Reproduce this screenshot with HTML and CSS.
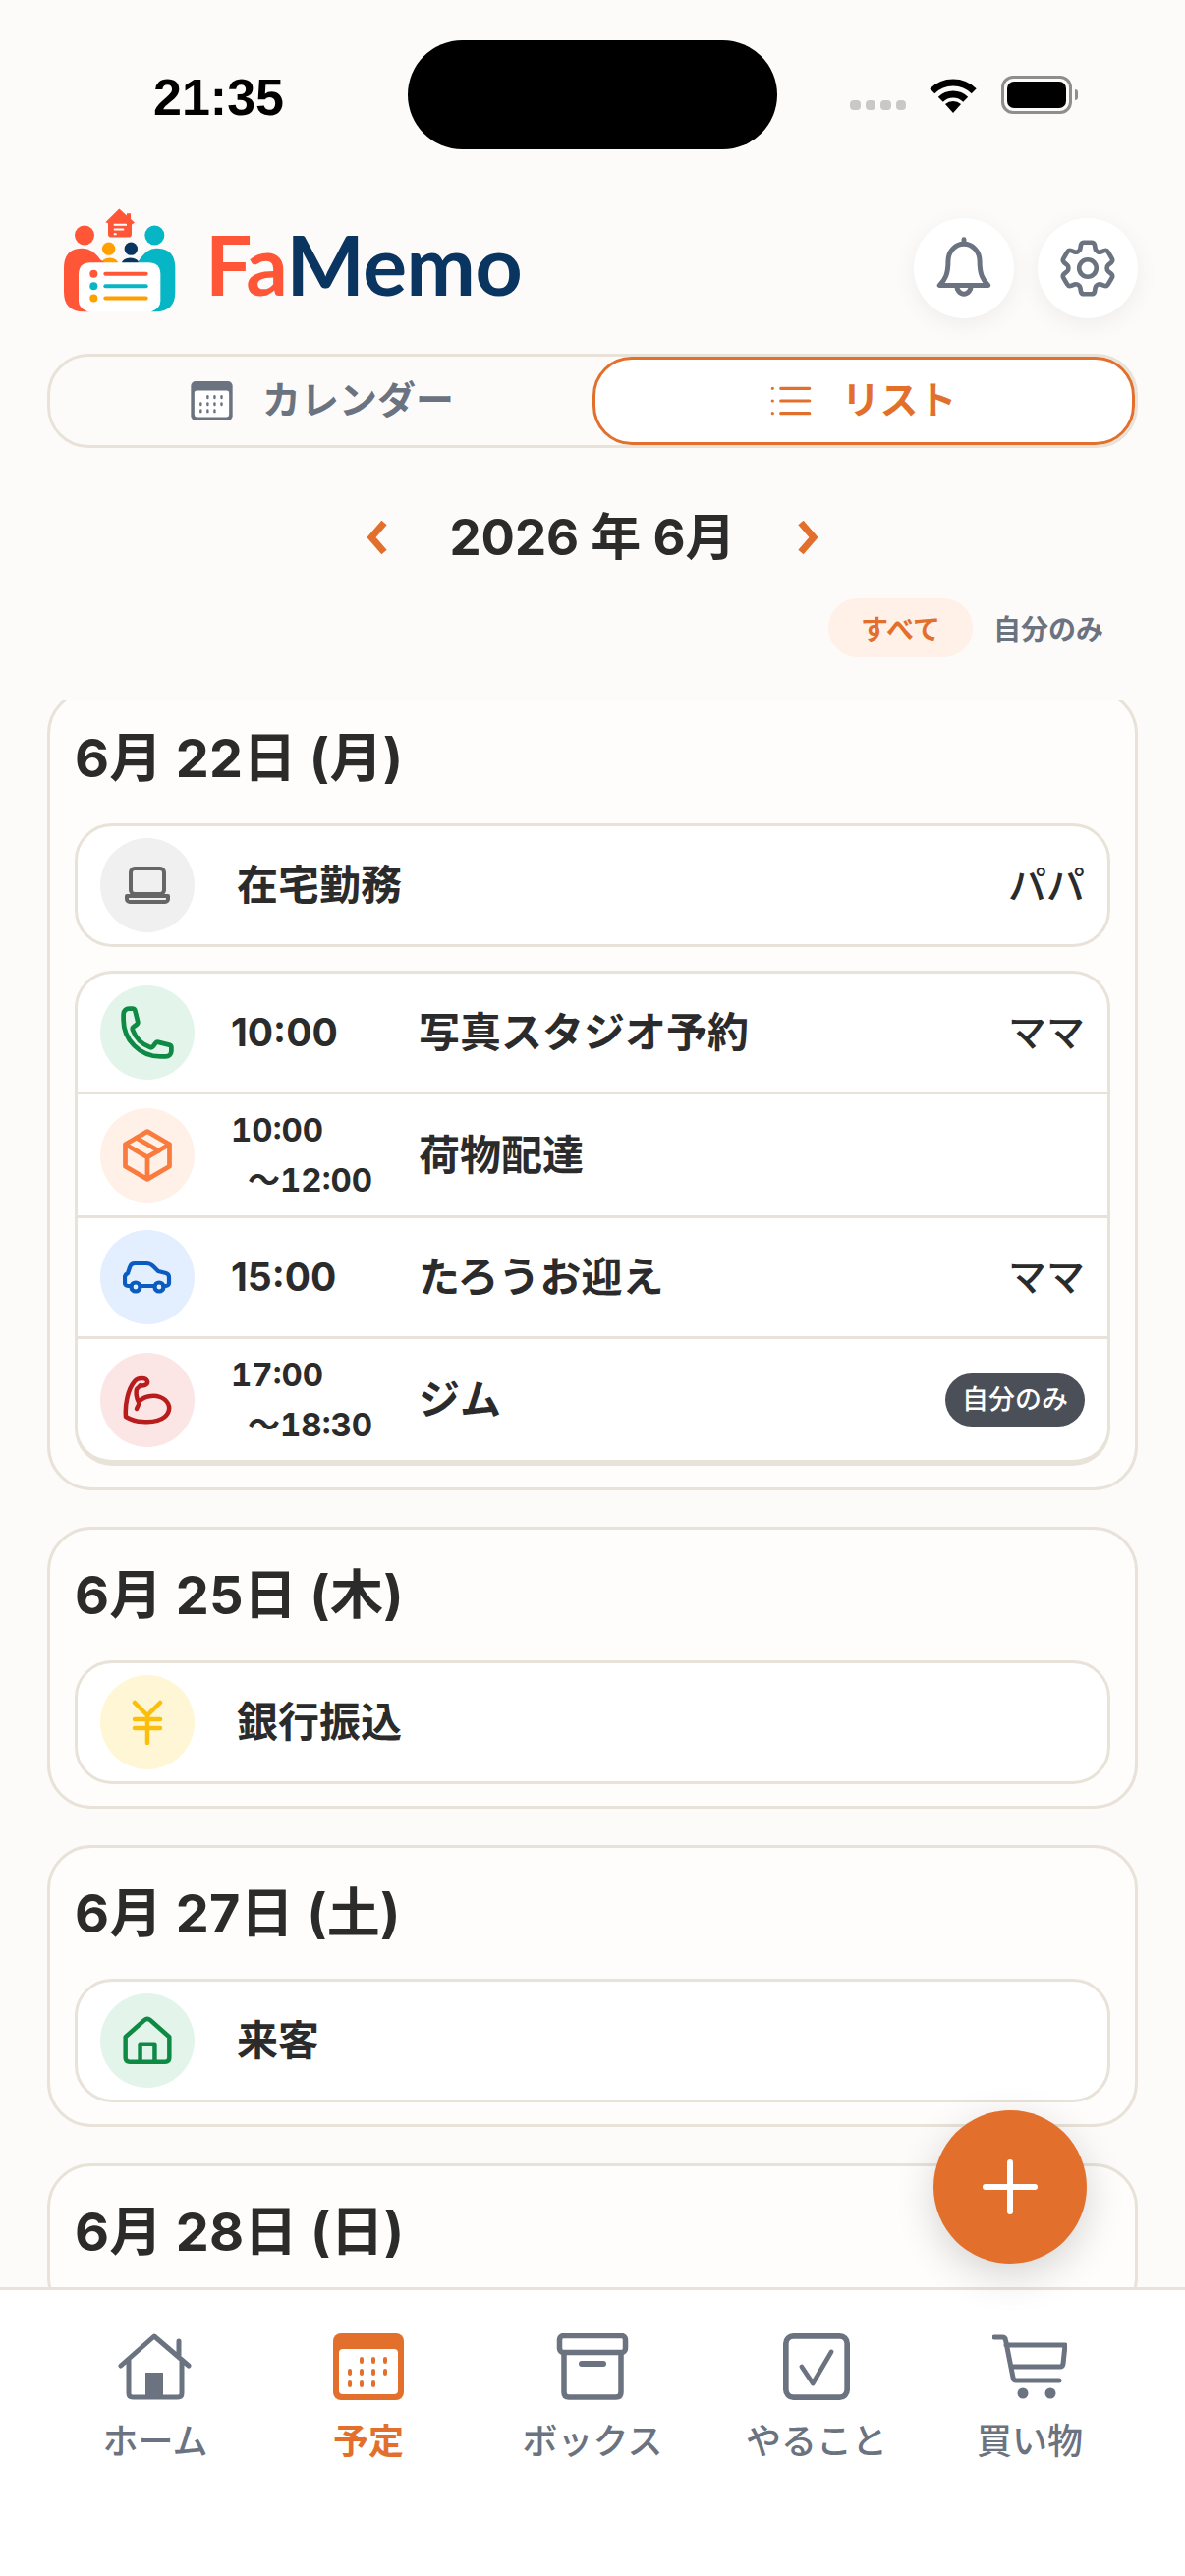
FILE: index.html
```html
<!DOCTYPE html>
<html lang="ja">
<head>
<meta charset="UTF-8">
<meta name="viewport" content="width=device-width, initial-scale=1.0">
<title>FaMemo</title>
<link rel="stylesheet" href="styles.css">
</head>
<body>
<svg class="sprite">
 <symbol id="cal" viewBox="0 0 72 68">
  <rect width="72" height="68" rx="8" fill="currentColor"/>
  <rect x="6" y="16" width="60" height="46" rx="4" fill="#fff"/>
  <g fill="currentColor">
   <rect x="27" y="24" width="4" height="7" rx="2"/><rect x="39" y="24" width="4" height="7" rx="2"/><rect x="51" y="24" width="4" height="7" rx="2"/>
   <rect x="15" y="36" width="4" height="7" rx="2"/><rect x="27" y="36" width="4" height="7" rx="2"/><rect x="39" y="36" width="4" height="7" rx="2"/><rect x="51" y="36" width="4" height="7" rx="2"/>
   <rect x="15" y="48" width="4" height="7" rx="2"/><rect x="27" y="48" width="4" height="7" rx="2"/><rect x="39" y="48" width="4" height="7" rx="2"/>
  </g>
 </symbol>
</svg>

<div class="status">
 <div class="clock">21:35</div>
 <div class="island"></div>
 <div class="status-icons">
  <div class="signal"><span></span><span></span><span></span><span></span></div>
  <svg class="wifi" viewBox="0 0 52 37" fill="none" stroke="#000" stroke-width="7">
   <path d="M4.8 14.8a30 30 0 0 1 42.4 0"/>
   <path d="M13.3 23.3a18 18 0 0 1 25.4 0"/>
   <path d="M26 37l-8-9a12 12 0 0 1 16 0z" fill="#000" stroke="none"/>
  </svg>
  <div class="battery"><span></span></div>
 </div>
</div>

<header class="top">
 <div class="brand">
  <svg class="brand-mark" viewBox="70 60 345 320">
   <path d="M200 105l42-41 23 21v-7h12v17l12 12-9 5v29q0 10-10 10h-52q-10 0-10-10v-33z" fill="#ff5638"/>
   <g fill="#fff"><rect x="225" y="110" width="40" height="6" rx="2"/><rect x="225" y="124" width="32" height="6" rx="2"/><rect x="225" y="138" width="9" height="6" rx="2"/></g>
   <circle cx="136" cy="145" r="30" fill="#ff5638"/>
   <circle cx="350" cy="145" r="30" fill="#06b6c4"/>
   <circle cx="210" cy="186" r="20" fill="#ffa000"/>
   <circle cx="278" cy="186" r="20" fill="#0a3560"/>
   <ellipse cx="213" cy="232" rx="26" ry="18" fill="#ffa000"/>
   <ellipse cx="276" cy="232" rx="27" ry="18" fill="#0a3560"/>
   <path d="M73 318V245q0-60 57-60 30 0 55 35l15 10-50 148h-17q-60 0-60-60z" fill="#ff5638"/>
   <path d="M413 318V245q0-60-58-60-30 0-55 40l40 153h13q60 0 60-60z" fill="#06b6c4"/>
   <path d="M118 265q0-37 37-37h176q37 0 37 37v80q0 22-28 33H146q-28-11-28-33z" fill="#fff"/>
   <circle cx="164" cy="263" r="12" fill="#ff5638"/><rect x="194" y="257" width="136" height="12" rx="6" fill="#ff5638"/>
   <circle cx="164" cy="300" r="12" fill="#06b6c4"/><rect x="194" y="294" width="136" height="12" rx="6" fill="#06b6c4"/>
   <circle cx="164" cy="337" r="12" fill="#ffa000"/><rect x="194" y="331" width="136" height="12" rx="6" fill="#ffa000"/>
  </svg>
  <div class="brand-name"><span class="fa">Fa</span><span class="memo">Memo</span></div>
 </div>
 <div class="top-btns">
  <button class="round-btn">
   <svg viewBox="0 0 24 24" class="btn-icon" fill="none" stroke="currentColor" stroke-width="1.700" stroke-linecap="round" stroke-linejoin="round">
    <path d="M17.500 9.500a5.500 6 0 0 0-11 0c0 4.500-1 6.500-3 8.500h17c-2-2-3-4-3-8.500z"/>
    <path d="M12 3.400V2"/>
    <path d="M9.500 18a2.500 3 0 0 0 5 0"/>
   </svg>
  </button>
  <button class="round-btn">
   <svg viewBox="0 0 24 24" class="btn-icon" fill="none" stroke="currentColor" stroke-width="1.600" stroke-linecap="round" stroke-linejoin="round">
    <path d="M9.594 3.94c.09-.542.56-.94 1.11-.94h2.593c.55 0 1.02.398 1.11.94l.213 1.281c.063.374.313.686.645.87.074.04.147.083.22.127.325.196.72.257 1.075.124l1.217-.456a1.125 1.125 0 0 1 1.37.49l1.296 2.247a1.125 1.125 0 0 1-.26 1.431l-1.003.827c-.293.241-.438.613-.43.992a7.723 7.723 0 0 1 0 .255c-.008.378.137.75.43.991l1.004.827c.424.35.534.955.26 1.43l-1.298 2.247a1.125 1.125 0 0 1-1.369.491l-1.217-.456c-.355-.133-.75-.072-1.076.124a6.47 6.47 0 0 1-.22.128c-.331.183-.581.495-.644.869l-.213 1.281c-.09.543-.56.94-1.11.94h-2.594c-.55 0-1.019-.398-1.11-.94l-.213-1.281c-.062-.374-.312-.686-.644-.87a6.52 6.52 0 0 1-.22-.127c-.325-.196-.72-.257-1.076-.124l-1.217.456a1.125 1.125 0 0 1-1.369-.49l-1.297-2.247a1.125 1.125 0 0 1 .26-1.431l1.004-.827c.292-.24.437-.613.43-.991a6.932 6.932 0 0 1 0-.255c.007-.38-.138-.751-.43-.992l-1.004-.827a1.125 1.125 0 0 1-.26-1.43l1.297-2.247a1.125 1.125 0 0 1 1.37-.491l1.216.456c.356.133.751.072 1.076-.124.072-.044.146-.086.22-.128.332-.183.582-.495.644-.869l.214-1.28z"/>
    <circle cx="12" cy="12" r="3"/>
   </svg>
  </button>
 </div>
</header>

<div class="tabs">
 <button class="tab">
  <svg class="tab-cal"><use href="#cal"/></svg>カレンダー
 </button>
 <button class="tab active">
  <svg class="tab-list" viewBox="0 0 44 32" fill="none" stroke="currentColor" stroke-width="3.400" stroke-linecap="round">
   <path d="M11 2.500h31M11 16h31M11 29.500h31M2 2.500h.1M2 16h.1M2 29.500h.1"/>
  </svg>リスト
 </button>
</div>

<div class="month">
 <svg class="chev" viewBox="0 0 22 34" fill="none" stroke="currentColor" stroke-width="7"><path d="M19 2L6 17l13 15"/></svg>
 <h2>2026 年 6月</h2>
 <svg class="chev" viewBox="0 0 22 34" fill="none" stroke="currentColor" stroke-width="7"><path d="M3 2l13 15L3 32"/></svg>
</div>

<div class="filter">
 <button class="chip on">すべて</button>
 <button class="chip">自分のみ</button>
</div>

<main class="list">
 <div class="list-inner">
  <section class="day">
   <h3>6月 22日 (月)</h3>
   <div class="group">
    <div class="row">
     <div class="ico grey">
      <svg viewBox="0 0 46 38" class="i46" fill="none" stroke="currentColor" stroke-width="4" stroke-linejoin="round">
       <rect x="6" y="2" width="34" height="26" rx="4"/>
       <path d="M2 30h42v3a3 3 0 0 1-3 3H5a3 3 0 0 1-3-3z"/>
      </svg>
     </div>
     <div class="name plain">在宅勤務</div>
     <div class="who">パパ</div>
    </div>
   </div>
   <div class="group thick">
    <div class="row">
     <div class="ico green">
      <svg viewBox="0 0 24 24" class="i60" fill="none" stroke="currentColor" stroke-width="1.900" stroke-linejoin="round">
       <path d="M2.250 6.750c0 8.284 6.716 15 15 15h2.250a2.250 2.250 0 0 0 2.250-2.250v-1.372c0-.516-.351-.966-.852-1.091l-4.423-1.106c-.44-.11-.902.055-1.173.417l-.97 1.293c-.282.376-.769.542-1.210.38a12.035 12.035 0 0 1-7.143-7.143c-.162-.441.004-.928.38-1.210l1.293-.97c.363-.271.527-.734.417-1.173L6.963 3.102a1.125 1.125 0 0 0-1.091-.852H4.500A2.250 2.250 0 0 0 2.250 4.500v2.250z"/>
      </svg>
     </div>
     <div class="time">10:00</div>
     <div class="name">写真スタジオ予約</div>
     <div class="who">ママ</div>
    </div>
    <div class="row">
     <div class="ico orange">
      <svg viewBox="0 0 24 24" class="i60" fill="none" stroke="currentColor" stroke-width="1.900" stroke-linecap="round" stroke-linejoin="round">
       <path d="M21 7.500l-9-5.250L3 7.500m18 0l-9 5.250m9-5.250v9l-9 5.250M3 7.500l9 5.250M3 7.500v9l9 5.250m0-9v9"/>
       <path d="M7.500 4.900l9 5.200"/>
      </svg>
     </div>
     <div class="time two">10:00<span>～12:00</span></div>
     <div class="name">荷物配達</div>
    </div>
    <div class="row">
     <div class="ico blue">
      <svg viewBox="0 0 50 32" class="i50" fill="none" stroke="currentColor" stroke-width="4.200" stroke-linecap="round" stroke-linejoin="round">
       <path d="M8 25H5a3 3 0 0 1-3-3v-6c0-2 1-3 3-4l2-6c.6-2 2-4 5-4h12c3 0 5 1 7 3l5 5 8 2c2 .6 3 2 3 4v6a3 3 0 0 1-3 3h-3M18 25h14"/>
       <circle cx="13" cy="26" r="4.500"/><circle cx="37" cy="26" r="4.500"/>
      </svg>
     </div>
     <div class="time">15:00</div>
     <div class="name">たろうお迎え</div>
     <div class="who">ママ</div>
    </div>
    <div class="row">
     <div class="ico red">
      <svg viewBox="0 0 50 50" class="i50" fill="none" stroke="currentColor" stroke-width="4.500" stroke-linecap="round" stroke-linejoin="round">
       <path d="M3 42C2 30 5 14 12 6c3-4 12-4 13 0 1 4-5 5-7 4l-4 4c-1 4 0 10 2 13 4-5 14-8 22-5 8 3 11 10 8 16-4 8-16 10-26 9-6 0-12-2-17-5z"/>
       <path d="M14 34c2-4 3-6 2-7"/>
      </svg>
     </div>
     <div class="time two">17:00<span>～18:30</span></div>
     <div class="name">ジム</div>
     <div class="badge">自分のみ</div>
    </div>
   </div>
  </section>

  <section class="day">
   <h3>6月 25日 (木)</h3>
   <div class="group">
    <div class="row">
     <div class="ico yellow">
      <svg viewBox="0 0 32 46" class="i46" fill="none" stroke="currentColor" stroke-width="4.500" stroke-linecap="round" stroke-linejoin="round">
       <path d="M3 3l13 13L29 3M3 20h26M3 29h26M16 16v28"/>
      </svg>
     </div>
     <div class="name plain">銀行振込</div>
    </div>
   </div>
  </section>

  <section class="day">
   <h3>6月 27日 (土)</h3>
   <div class="group">
    <div class="row">
     <div class="ico green">
      <svg viewBox="0 0 46 47" class="i50" fill="none" stroke="currentColor" stroke-width="4.200" stroke-linejoin="round">
       <path d="M2 20L20 4q3-2.500 6 0l18 16v20q0 4-4 4H6q-4 0-4-4z"/>
       <path d="M16 44V27h14v17"/>
      </svg>
     </div>
     <div class="name plain">来客</div>
    </div>
   </div>
  </section>

  <section class="day">
   <h3>6月 28日 (日)</h3>
  </section>
 </div>
</main>

<button class="fab">
 <svg viewBox="0 0 56 56" fill="none" stroke="#fff" stroke-width="6" stroke-linecap="round"><path d="M28 3v50M3 28h50"/></svg>
</button>

<nav class="bottom">
 <a class="nav-item">
  <svg class="nav-icon" viewBox="0 0 76 68" fill="none" stroke="currentColor" stroke-width="5" stroke-linecap="round" stroke-linejoin="round">
   <path d="M3 33L37 3l35 30M62 8v14M11 27v34q0 4 4 4h46q4 0 4-4V27"/>
   <rect x="28" y="40" width="18" height="26" fill="currentColor" stroke="none"/>
  </svg>
  ホーム
 </a>
 <a class="nav-item on">
  <svg class="nav-icon"><use href="#cal"/></svg>
  予定
 </a>
 <a class="nav-item">
  <svg class="nav-icon" viewBox="0 0 72 68" fill="none" stroke="currentColor" stroke-width="5.500" stroke-linejoin="round">
   <rect x="2.500" y="2.500" width="67" height="17" rx="4"/>
   <path d="M7 20v40q0 5 5 5h48q5 0 5-5V20"/>
   <rect x="22" y="28" width="28" height="6" rx="3" fill="currentColor" stroke="none"/>
  </svg>
  ボックス
 </a>
 <a class="nav-item">
  <svg class="nav-icon" viewBox="0 0 72 72" fill="none" stroke="currentColor" stroke-linejoin="round" stroke-linecap="round">
   <rect x="3" y="3" width="66" height="66" rx="8" stroke-width="6"/>
   <path d="M20 36l12 18L52 20" stroke-width="5"/>
  </svg>
  やること
 </a>
 <a class="nav-item">
  <svg class="nav-icon" viewBox="0 0 76 66" fill="none" stroke="currentColor" stroke-width="5" stroke-linecap="round" stroke-linejoin="round">
   <path d="M2 3h8q3 0 3.500 3L21 44q.5 3 3 3h44M14 11h60l-2 19q-.5 3-3 3H19"/>
   <circle cx="31" cy="60" r="5.500" fill="currentColor" stroke="none"/><circle cx="59" cy="60" r="5.500" fill="currentColor" stroke="none"/>
  </svg>
  買い物
 </a>
</nav>
</body>
</html>
```

FILE: styles.css
```css
*{margin:0;padding:0;box-sizing:border-box;}
html,body{height:100%;}
body{width:1206px;height:2622px;display:flex;flex-direction:column;position:relative;overflow:hidden;background:#fdfbf9;color:#2b2b2b;font-family:Inter,"Noto Sans CJK JP",sans-serif;}
button{font:inherit;border:none;background:none;color:inherit;}
.sprite{display:none;}

/* status bar */
.status{display:flex;align-items:center;height:111px;margin-top:41px;padding-left:156px;flex:none;}
.clock{width:259px;padding-top:5px;font:bold 52px "Liberation Sans",sans-serif;color:#000;}
.island{width:376px;height:111px;border-radius:56px;background:#000;}
.status-icons{display:flex;align-items:center;margin-left:74px;}
.signal{display:flex;gap:5px;margin-top:20px;}
.signal span{width:10.500px;height:10px;border-radius:4px;background:#c8c8c8;}
.wifi{width:52px;height:37px;margin:0 23px 0 22px;}
.battery{width:72px;height:39px;border:3px solid #8e8e8e;border-radius:12px;padding:3px;position:relative;}
.battery span{display:block;height:100%;border-radius:7px;background:#000;}
.battery:after{content:'';position:absolute;right:-9px;top:11px;width:3px;height:11px;border-radius:0 3px 3px 0;background:#8e8e8e;}

/* header */
.top{display:flex;justify-content:space-between;height:113px;margin-top:59px;padding:0 48px 0 64px;flex:none;}
.brand{display:flex;align-items:flex-start;gap:30px;}
.brand-mark{width:115px;height:107px;}
.brand-name{font:bold 84px/92px Lato,sans-serif;margin-top:12px;letter-spacing:-.5px;}
.fa{color:#ff5638;}
.memo{color:#0a3560;}
.top-btns{display:flex;align-items:flex-end;gap:24px;}
.round-btn{width:102px;height:102px;border-radius:50%;background:#fff;color:#6b7280;display:flex;align-items:center;justify-content:center;box-shadow:0 6px 24px rgba(0,0,0,.06);}
.btn-icon{width:70px;height:70px;}

/* tabs */
.tabs{display:flex;height:96px;margin:36px 48px 0;border:3px solid #e8e2d9;border-radius:42px;flex:none;}
.tab{flex:0 0 50%;display:flex;align-items:center;justify-content:center;gap:30px;padding-bottom:3px;font-size:39px;line-height:50px;font-weight:700;color:#6b7280;border-radius:40px;}
.tab.active{background:#fff;color:#e2702c;border:3px solid #e2702c;}
.tab-cal{width:43px;height:40px;margin:3px 0 0 2px;}
.tab-list{width:42px;height:30px;margin-top:3px;}

/* month */
.month{display:flex;align-items:center;justify-content:center;gap:63px;height:72px;margin-top:55px;color:#e2702c;flex:none;}
.month h2{font-size:51px;font-weight:700;color:#2b2b2b;line-height:72px;}
.chev{width:22px;height:34px;}

/* filter */
.filter{display:flex;justify-content:flex-end;align-items:center;gap:21px;height:60px;margin-top:26px;padding-right:83px;flex:none;}
.chip{font-size:28px;font-weight:700;color:#6b7280;}
.chip.on{height:60px;padding:0 33px;border-radius:30px;background:#fff0e8;color:#e2702c;}

/* list */
.list{flex:1;min-height:0;overflow:hidden;margin-top:44px;}
.list-inner{margin-top:-11px;padding:0 48px;display:flex;flex-direction:column;gap:37px;}
.day{border:3px solid #e8e2d9;border-radius:45px;padding:28px 25px 22px;background:#fefdfb;}
.day h3{font-size:54px;line-height:78px;font-weight:700;margin-bottom:27px;letter-spacing:.3px;}
.group{background:#fff;border:3px solid #e8e2d9;border-radius:38px;overflow:hidden;}
.group + .group{margin-top:24px;}
.group.thick{border-bottom-width:6px;}
.row{display:flex;align-items:center;min-height:120px;padding:11px 23px;}
.row + .row{min-height:123px;border-top:3px solid #e8e2d9;}
.ico{width:96px;height:96px;border-radius:50%;flex:none;display:flex;align-items:center;justify-content:center;}
.ico.grey{background:#f0f0f0;color:#666;}
.ico.green{background:#e3f5ea;color:#0f8a45;}
.ico.orange{background:#fff1e8;color:#f97b3d;}
.ico.blue{background:#e3eefe;color:#0b5cc0;}
.ico.red{background:#fbe5e5;color:#b91c1c;}
.ico.yellow{background:#fff6d6;color:#fbbf0b;}
.i46{width:46px;height:46px;}
.i50{width:50px;height:50px;}
.i60{width:60px;height:60px;}
.time{width:191px;margin-left:37px;font-size:39px;line-height:50px;font-weight:700;flex:none;}
.time.two{font-size:33px;line-height:50.500px;font-variant-numeric:tabular-nums;}
.time span{display:block;padding-left:17px;}
.name{font-size:42px;line-height:60px;font-weight:700;flex:1;}
.name.plain{margin-left:43px;}
.who{font-size:39px;line-height:60px;font-weight:500;}
.badge{height:54px;padding:0 17px;border-radius:27px;background:#4b5058;color:#fff;font-size:27px;line-height:54px;font-weight:500;}

/* fab */
.fab{position:absolute;left:950px;top:2148px;width:156px;height:156px;border-radius:50%;background:#e2702c;display:flex;align-items:center;justify-content:center;box-shadow:0 12px 40px rgba(0,0,0,.16);z-index:5;}
.fab svg{width:56px;height:56px;}

/* bottom nav */
.bottom{height:294px;flex:none;background:#fff;border-top:3px solid #e8e2d9;padding:44px 53px 0;display:grid;grid-template-columns:210px 224px 232px 224px 210px;align-items:start;}
.nav-item{display:flex;flex-direction:column;align-items:center;gap:21px;font-size:36px;line-height:42px;font-weight:500;color:#6b7280;}
.nav-item.on{color:#e2702c;font-weight:700;}
.nav-icon{width:76px;height:68px;}
```
